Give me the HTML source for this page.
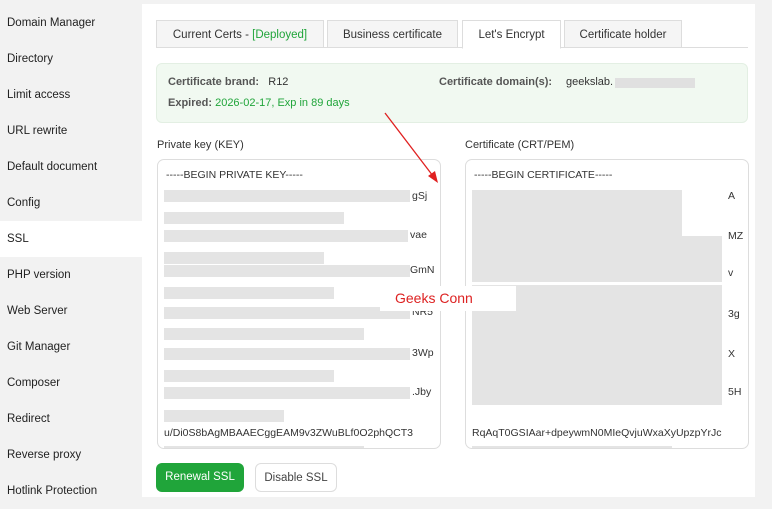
<!DOCTYPE html>
<html><head><style>
body{margin:0;width:772px;height:497px;overflow:hidden;font-family:"Liberation Sans",sans-serif;font-size:12px;color:#333;background:#f2f2f2;position:relative}
.side{position:absolute;left:0;top:5px;width:142px;height:497px;background:#f2f2f2}
.side div{height:36px;line-height:36px;padding-left:7px;font-size:11.5px;color:#222}
.side .act{background:#fff}
.main{position:absolute;left:142px;top:4px;width:613px;height:493px;background:#fff}
.tab{position:absolute;top:20px;height:28px;line-height:28px;text-align:center;border:1px solid #ddd;background:#f5f5f5;font-size:11.5px;color:#333;box-sizing:border-box}
.info{position:absolute;left:156px;top:63px;width:592px;height:60px;background:#f1f9f1;border:1px solid #e3efe3;border-radius:6px;box-sizing:border-box;font-size:11px}
.lab{position:absolute;font-size:11px;color:#333}
.ta{position:absolute;top:159px;height:290px;width:284px;border:1px solid #ddd;border-radius:7px;box-sizing:border-box;background:#fff;overflow:hidden;font-size:10.5px}
.ta .t{position:absolute;left:8px;white-space:nowrap}
.b{position:absolute;height:12px;background:#e4e4e4}
.btn{position:absolute;top:463px;height:29px;line-height:29px;border-radius:6px;font-size:11.5px;text-align:center;box-sizing:border-box}
</style></head><body>
<div class="side">
<div>Domain Manager</div><div>Directory</div><div>Limit access</div><div>URL rewrite</div><div>Default document</div><div>Config</div><div class="act">SSL</div><div>PHP version</div><div>Web Server</div><div>Git Manager</div><div>Composer</div><div>Redirect</div><div>Reverse proxy</div><div>Hotlink Protection</div>
</div>
<div class="main"></div>
<div style="position:absolute;left:156px;top:47px;width:592px;border-top:1px solid #ddd"></div>
<div class="tab" style="left:156px;width:168px">Current Certs - <span style="color:#20a53a">[Deployed]</span></div>
<div class="tab" style="left:327px;width:131px">Business certificate</div>
<div class="tab" style="left:462px;width:99px;background:#fff;border-bottom-color:#fff;height:29px">Let's Encrypt</div>
<div class="tab" style="left:564px;width:118px">Certificate holder</div>
<div class="info">
<div style="position:absolute;left:11px;top:12px"><b style="color:#555">Certificate brand:</b>&nbsp;&nbsp; R12</div>
<div style="position:absolute;left:11px;top:33px"><b style="color:#555">Expired:</b> <span style="color:#20a53a">2026-02-17, Exp in 89 days</span></div>
<div style="position:absolute;left:282px;top:12px;white-space:nowrap"><b style="color:#555">Certificate domain(s):</b></div>
<div style="position:absolute;left:409px;top:12px">geekslab.</div>
<div style="position:absolute;left:458px;top:14px;width:80px;height:10px;background:#e0e0e0"></div>
</div>
<div class="lab" style="left:157px;top:139px">Private key (KEY)</div>
<div class="lab" style="left:465px;top:139px">Certificate (CRT/PEM)</div>
<div class="ta" style="left:157px">
<div class="t" style="top:9px">-----BEGIN PRIVATE KEY-----</div>
<div class="b" style="left:6px;top:30px;width:246px"></div><div class="t" style="left:254px;top:30px">gSj</div>
<div class="b" style="left:6px;top:52px;width:180px"></div>
<div class="b" style="left:6px;top:70px;width:244px"></div><div class="t" style="left:252px;top:69px">vae</div>
<div class="b" style="left:6px;top:92px;width:160px"></div>
<div class="b" style="left:6px;top:105px;width:246px"></div><div class="t" style="left:252px;top:104px">GmN</div>
<div class="b" style="left:6px;top:127px;width:170px"></div>
<div class="b" style="left:6px;top:147px;width:246px"></div><div class="t" style="left:254px;top:146px">NR5</div>
<div class="b" style="left:6px;top:168px;width:200px"></div>
<div class="b" style="left:6px;top:188px;width:246px"></div><div class="t" style="left:254px;top:187px">3Wp</div>
<div class="b" style="left:6px;top:210px;width:170px"></div>
<div class="b" style="left:6px;top:227px;width:246px"></div><div class="t" style="left:254px;top:226px">.Jby</div>
<div class="b" style="left:6px;top:250px;width:120px"></div>
<div class="t" style="left:6px;top:267px">u/Di0S8bAgMBAAECggEAM9v3ZWuBLf0O2phQCT3</div>
<div class="b" style="left:6px;top:286px;width:200px;height:3px"></div>
</div>
<div class="ta" style="left:465px">
<div class="t" style="top:9px">-----BEGIN CERTIFICATE-----</div>
<div class="b" style="left:6px;top:30px;width:210px;height:46px"></div><div class="t" style="left:262px;top:30px">A</div>
<div class="b" style="left:6px;top:76px;width:250px;height:46px"></div><div class="t" style="left:262px;top:70px">MZ</div>
<div class="t" style="left:262px;top:107px">v</div>
<div class="b" style="left:6px;top:125px;width:250px;height:120px"></div>
<div class="t" style="left:262px;top:148px">3g</div><div class="t" style="left:262px;top:188px">X</div><div class="t" style="left:262px;top:226px">5H</div>
<div class="t" style="left:6px;top:267px">RqAqT0GSIAar+dpeywmN0MIeQvjuWxaXyUpzpYrJc</div>
<div class="b" style="left:6px;top:286px;width:200px;height:3px"></div>
</div>
<div style="position:absolute;left:380px;top:286px;width:136px;height:25px;background:#fff;color:#d22;font-size:14px;line-height:25px;padding-left:15px;box-sizing:border-box">Geeks Conn</div>
<svg style="position:absolute;left:0;top:0" width="772" height="497"><line x1="385" y1="113" x2="433" y2="176" stroke="#e02020" stroke-width="1.3"/><polygon points="438,183 428,176 435,171" fill="#e02020"/></svg>
<div class="btn" style="left:156px;width:88px;background:#20a53a;color:#fff">Renewal SSL</div>
<div class="btn" style="left:255px;width:82px;border:1px solid #ddd;color:#444;background:#fff">Disable SSL</div>
</body></html>
